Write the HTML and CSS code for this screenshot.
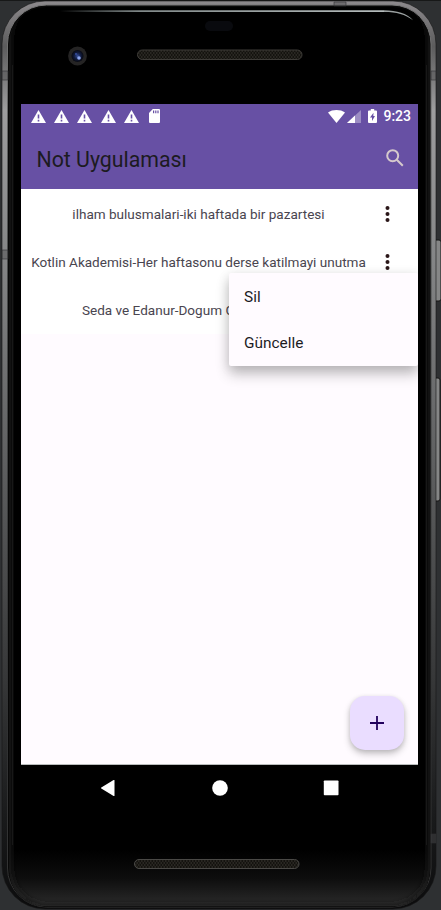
FILE: index.html
```
<!DOCTYPE html>
<html lang="tr">
<head>
<meta charset="utf-8">
<title>Not Uygulaması</title>
<link rel="stylesheet" href="styles.css">
</head>
<body>
<div class="stage">
  <svg class="frame" width="441" height="910" viewBox="0 0 441 910" aria-hidden="true">
    <defs>
      <linearGradient id="metal" x1="0" y1="0" x2="0" y2="1">
        <stop offset="0" stop-color="#8d8a8d"/><stop offset=".05" stop-color="#5c5c5d"/>
        <stop offset=".12" stop-color="#9d9d9e"/><stop offset=".28" stop-color="#858687"/>
        <stop offset=".5" stop-color="#606162"/><stop offset=".75" stop-color="#363738"/>
        <stop offset=".9" stop-color="#191a1b"/><stop offset="1" stop-color="#0c0c0d"/>
      </linearGradient>
      <linearGradient id="inner" x1="0" y1="0" x2="0" y2="1">
        <stop offset="0" stop-color="#777"/><stop offset=".3" stop-color="#484a4a"/>
        <stop offset=".8" stop-color="#303132"/><stop offset="1" stop-color="#333"/>
      </linearGradient>
      <linearGradient id="glow" x1="0" y1="0" x2="0" y2="1">
        <stop offset="0" stop-color="#000"/><stop offset=".5" stop-color="#0d0d0d"/><stop offset="1" stop-color="#2b2b2b"/>
      </linearGradient>
      <linearGradient id="shine" x1="0" y1="0" x2="1" y2="0">
        <stop offset="0" stop-color="#9aa5a5" stop-opacity="0"/><stop offset=".25" stop-color="#818989"/><stop offset="1" stop-color="#b5bcbc"/>
      </linearGradient>
      <pattern id="mesh" width="3" height="4" patternUnits="userSpaceOnUse">
        <rect width="3" height="4" fill="#14130f"/><path d="M0 1h1.5M1.5 3H3" stroke="#3e3b34"/>
      </pattern>
      <radialGradient id="lens"><stop offset="0" stop-color="#354f9c"/><stop offset=".55" stop-color="#111b3d"/><stop offset="1" stop-color="#080910"/></radialGradient>
      <filter id="soft"><feGaussianBlur stdDeviation="2.500"/></filter>
      <clipPath id="glass"><rect x="9" y="7" width="421" height="900" rx="37"/></clipPath>
    </defs>
    <rect width="441" height="1" fill="#171818"/>
    <rect x="434" y="240" width="7" height="61" rx="2" fill="#858686" stroke="#161616"/>
    <rect x="434" y="378" width="6" height="123" rx="2" fill="#858686" stroke="#161616"/>
    <rect x="2" y="1" width="434" height="908" rx="43" fill="url(#metal)" stroke="#161616" stroke-width=".6"/>
    <rect x="7.500" y="5" width="423.500" height="902" rx="39" fill="#080808" stroke="url(#inner)"/>
    <g clip-path="url(#glass)">
      <rect x="9" y="7" width="421" height="900" rx="37" fill="#000"/>
      <rect x="9" y="850" width="421" height="56" fill="url(#glow)"/>
      <rect x="10" y="0" width="419" height="906" rx="38" fill="none" stroke="#1a1a1a" stroke-width="4" filter="url(#soft)"/>
      <path d="M12.500 65v780M426.500 65v780" stroke="#181818"/>
    </g>
    <path d="M60 10.300H384v1.800H60z" fill="url(#shine)"/>
    <path d="M384 10.300c13 .2 23 3 29 10-8-6-17-8.300-29-8.200z" fill="#9ca2a2"/>
    <path d="M2 71h6v9H2zM2 250h6v9H2zM431 71h5v9h-5zM334 2h12v4h-12zM431 834h5v9h-5z" fill="#4d4e4f" fill-opacity=".45" stroke="#303132" stroke-width=".6"/>
    <rect x="205" y="21" width="28" height="10" rx="5" fill="#090a0e"/>
    <circle cx="77.500" cy="56" r="9.400" fill="#252424"/>
    <circle cx="77.500" cy="56" r="6" fill="url(#lens)"/>
    <circle cx="79" cy="58" r="1.800" fill="#8da5ee"/><circle cx="76" cy="54" r="1" fill="#344b9c"/>
    <rect x="137.500" y="50" width="164.500" height="9.500" rx="4.700" fill="url(#mesh)" stroke="#3e3c38"/>
    <rect x="134.500" y="859.500" width="164.500" height="9" rx="4.500" fill="url(#mesh)" stroke="#4a4946"/>
  </svg>
  <main class="screen">
    <header class="header">
      <div class="status">
        <div class="notices">
          <svg class="warn" viewBox="0 0 15 13"><path d="M7.500 0 15 13H0zM6.700 4.500v4h1.600v-4zm0 5.300v1.600h1.600V9.800z"/></svg>
          <svg class="warn" viewBox="0 0 15 13"><path d="M7.500 0 15 13H0zM6.700 4.500v4h1.600v-4zm0 5.300v1.600h1.600V9.800z"/></svg>
          <svg class="warn" viewBox="0 0 15 13"><path d="M7.500 0 15 13H0zM6.700 4.500v4h1.600v-4zm0 5.300v1.600h1.600V9.800z"/></svg>
          <svg class="warn" viewBox="0 0 15 13"><path d="M7.500 0 15 13H0zM6.700 4.500v4h1.600v-4zm0 5.300v1.600h1.600V9.800z"/></svg>
          <svg class="warn" viewBox="0 0 15 13"><path d="M7.500 0 15 13H0zM6.700 4.500v4h1.600v-4zm0 5.300v1.600h1.600V9.800z"/></svg>
          <svg class="card" viewBox="0 0 11 14"><path d="M3.800 0H10a1 1 0 0 1 1 1v12a1 1 0 0 1-1 1H1a1 1 0 0 1-1-1V4zM4 1.500v2.700h1.200V1.500zm2.200 0v2.700h1.200V1.500zm2.200 0v2.700h1.200V1.500z"/></svg>
        </div>
        <div class="system">
          <svg class="wifi" viewBox="0 0 17 13"><path d="M0 2.500C4.500-.8 12.500-.8 17 2.500L8.500 13z"/></svg>
          <svg class="signal" viewBox="0 0 14 13"><path opacity=".35" d="M14 0v13H0z"/><path d="M8 5.600V13H0z"/></svg>
          <svg class="battery" viewBox="0 0 9 14"><path d="M2.800 0h3.400v1.500H8a1 1 0 0 1 1 1V13a1 1 0 0 1-1 1H1a1 1 0 0 1-1-1V2.500a1 1 0 0 1 1-1h1.800zM5.500 3.700 2 8.500h2v3.500L7 7H5.300z"/></svg>
          <span class="clock">9:23</span>
        </div>
      </div>
      <div class="toolbar">
        <h1 class="title">Not Uygulaması</h1>
        <svg class="search" viewBox="0 0 18 18"><circle cx="6.700" cy="6.700" r="5.500"/><path d="m10.800 10.800 6 6"/></svg>
      </div>
    </header>
    <ul class="notes">
      <li class="note"><span class="text">ilham bulusmalari-iki haftada bir pazartesi</span><svg class="more" viewBox="0 0 5 16"><circle cx="2.500" cy="2" r="2"/><circle cx="2.500" cy="8" r="2"/><circle cx="2.500" cy="14" r="2"/></svg></li>
      <li class="note"><span class="text">Kotlin Akademisi-Her haftasonu derse katilmayi unutma</span><svg class="more" viewBox="0 0 5 16"><circle cx="2.500" cy="2" r="2"/><circle cx="2.500" cy="8" r="2"/><circle cx="2.500" cy="14" r="2"/></svg></li>
      <li class="note"><span class="text clipped">Seda ve Edanur-Dogum G</span></li>
    </ul>
    <div class="menu"><div class="item">Sil</div><div class="item">Güncelle</div></div>
    <button class="fab" aria-label="Ekle"><svg width="14" height="14" viewBox="0 0 14 14"><path d="M7 0v14M0 7h14"/></svg></button>
  </main>
  <nav class="nav">
    <svg class="key" viewBox="0 0 16 16"><path d="M14.500.6v14.800a.6.6 0 0 1-.9.500L1.300 8.600a.6.600 0 0 1 0-1.100L13.600.100a.6.600 0 0 1 .9.500z"/></svg>
    <svg class="key" viewBox="0 0 16 16"><circle cx="8" cy="8" r="7.800"/></svg>
    <svg class="key" viewBox="0 0 16 16"><rect x=".8" y=".5" width="14.700" height="14.700" rx=".8"/></svg>
  </nav>
</div>
</body>
</html>
```
FILE: styles.css
```
* { box-sizing: border-box; }
body { margin: 0; background: #2e3032; font-family: Roboto, "Liberation Sans", sans-serif; overflow: hidden; }
svg { display: block; flex: none; }
.stage { position: relative; width: 441px; height: 910px; padding: 104px 23px 0 21px; overflow: hidden; }
.frame { position: absolute; left: 0; top: 0; }
.screen { position: relative; height: 661px; background: #fffbff; overflow: hidden; border-bottom: 1px solid #b9bcbc; }
.header { height: 85px; background: #6750a4; color: #1c1b1f; }
.status { height: 24px; padding: 0 7px 0 10px; display: flex; justify-content: space-between; align-items: center; }
.status svg { fill: #fff; }
.status path { fill-rule: evenodd; }
.notices { display: flex; align-items: center; gap: 8.200px; }
.warn { width: 15px; height: 13px; }
.card { width: 11px; height: 14px; margin-left: 2px; }
.system { display: flex; align-items: center; color: #fff; }
.wifi { width: 17px; height: 13px; }
.signal { width: 14px; height: 13px; margin-left: 2px; }
.battery { width: 9px; height: 14px; margin: 0 6px 0 7px; }
.clock { font-size: 14px; font-weight: 500; line-height: 24px; }
.toolbar { height: 61px; padding: 2px 14px 0 15.500px; display: flex; align-items: center; justify-content: space-between; }
.title { margin: 0; font-size: 21.300px; font-weight: 400; line-height: 28px; }
.search { width: 18px; height: 18px; margin-top: -4px; fill: none; stroke: #d5c9cc; stroke-width: 2; }
.notes { margin: 0; padding: 0; list-style: none; }
.note { height: 48.300px; padding: 1px 28.500px 0 9.500px; background: #fff; display: flex; align-items: center; justify-content: space-between; }
.text { width: 336px; color: #49454f; font-size: 13.550px; line-height: 18px; text-align: center; white-space: nowrap; }
.clipped { padding-left: 51.500px; text-align: left; }
.more { width: 5px; height: 16px; fill: #2b1719; }
.menu { position: absolute; left: 208px; top: 169px; width: 189px; height: 93px; padding-top: 1px; background: #fffbff; border-radius: 2px; box-shadow: 0 8px 14px rgba(0,0,0,.24), 0 2px 12px rgba(0,0,0,.1); }
.item { height: 46px; padding-left: 15px; font-size: 15.400px; line-height: 47px; color: #1c1b1f; }
.fab { position: absolute; right: 14px; bottom: 14px; width: 54px; height: 54px; padding: 0; border: 0; border-radius: 15px; background: #eaddff; display: flex; align-items: center; justify-content: center; box-shadow: 0 4px 7px rgba(0,0,0,.22), 0 1px 4px rgba(0,0,0,.1); }
.fab path { stroke: #21005d; stroke-width: 1.800; }
.nav { position: relative; height: 46px; padding: 0 79px; display: flex; align-items: center; justify-content: space-between; }
.key { width: 16px; height: 16px; fill: #fff; }
```
